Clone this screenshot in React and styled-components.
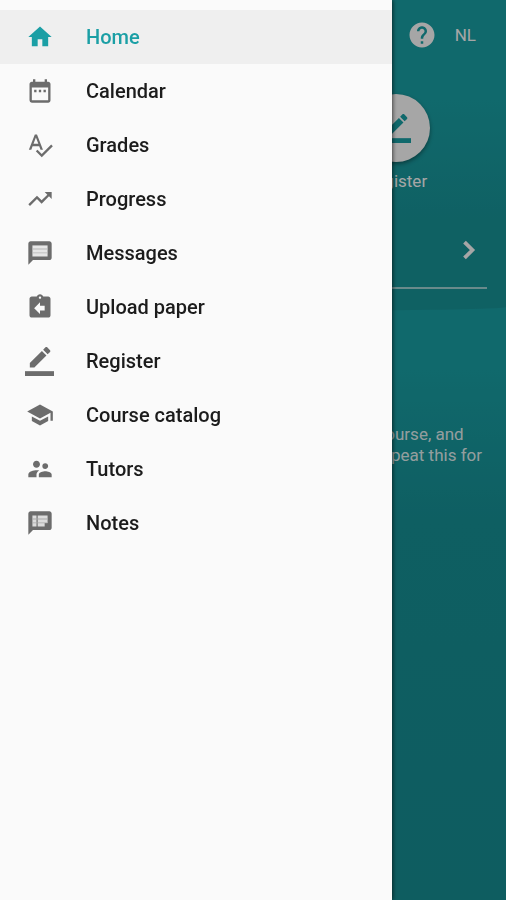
// external dependencies
import React from 'react';
import {
  MdAssignmentReturn,
  MdDateRange,
  MdHelp,
  MdHome,
  MdSchool,
  MdSpellcheck,
  MdSupervisorAccount,
  MdTrendingUp
} from 'react-icons/md';
import styled, {createGlobalStyle} from 'styled-components';

const GlobalStyle = createGlobalStyle`
  *, *::before, *::after {
    box-sizing: border-box;
  }

  body {
    background-color: #0e5d60;
    font-family: Roboto, "Liberation Sans", sans-serif;
    margin: 0;
  }
`;

export const Page = styled.div`
  background: linear-gradient(180deg, #1aa1a6 0, #1aa1a6 370px, #169297 520px, #168f94 100%);
  display: flex;
  flex-direction: column;
  min-height: 100vh;
  overflow: hidden;
  position: relative;
`;

export const Hero = styled.div`
  background: linear-gradient(180deg, #1aa1a6 0, #1aa1a6 100px, #189599 220px, #189599 100%);
  border-radius: 0 0 50% 50% / 0 0 4px 4px;
  padding: 0 19px 22px;
`;

export const Toolbar = styled.header`
  align-items: center;
  color: #fff;
  display: flex;
  gap: 18px;
  height: 70px;
  justify-content: flex-end;
  padding-right: 11px;
`;

export const ToolbarButton = styled.button`
  align-items: center;
  background: none;
  border: 0;
  color: inherit;
  display: flex;
  font: inherit;
  font-size: 17px;
  padding: 0;

  svg {
    height: 30px;
    width: 30px;
  }
`;

export const Shortcuts = styled.div`
  display: flex;
  justify-content: flex-end;
  padding: 24px 57px 0 0;
`;

export const Shortcut = styled.a`
  align-items: center;
  color: #fff;
  display: flex;
  flex-direction: column;
  font-size: 17px;
  gap: 9px;
  line-height: 20px;
  text-decoration: none;
`;

export const ShortcutIcon = styled.span`
  align-items: center;
  background-color: #fff;
  border-radius: 50%;
  box-shadow: 0 2px 4px rgba(0, 0, 0, 0.4);
  color: #1aa1a6;
  display: flex;
  height: 68px;
  justify-content: center;
  width: 68px;

  svg {
    height: 29px;
    width: 29px;
  }
`;

export const NextRow = styled.div`
  border-bottom: 2px solid rgba(255, 255, 255, 0.6);
  display: flex;
  height: 98px;
  justify-content: flex-end;
  padding-top: 42px;
`;

export const NextButton = styled(ToolbarButton)`
  color: #fff;
  height: 34px;

  svg {
    height: 36px;
    width: 36px;
  }
`;

export const Intro = styled.p`
  align-self: flex-end;
  color: rgba(255, 255, 255, 0.9);
  font-size: 17px;
  line-height: 21px;
  margin: 113px 24px 0;
`;

export const Scrim = styled.div`
  background-color: rgba(0, 0, 0, 0.35);
  inset: 0;
  position: fixed;
`;

export const Drawer = styled.aside`
  background-color: #fafafa;
  bottom: 0;
  box-shadow: 1px 0 4px rgba(0, 0, 0, 0.6);
  left: 0;
  max-width: 85vw;
  overflow-y: auto;
  padding-top: 10px;
  position: fixed;
  top: 0;
  width: 392px;
`;

export const Menu = styled.ul`
  list-style: none;
  margin: 0;
  padding: 0;
`;

export const MenuLink = styled.a`
  align-items: center;
  background-color: ${({$isActive}) => ($isActive ? '#efefef' : 'transparent')};
  color: ${({$isActive}) => ($isActive ? '#1b9fa5' : '#1c1c1c')};
  display: flex;
  font-size: 20px;
  font-weight: 500;
  gap: 32px;
  height: 54px;
  padding: 0 25px;
  text-decoration: none;
`;

export const MenuIcon = styled.span`
  align-items: center;
  color: ${({$isActive}) => ($isActive ? '#1b9fa5' : '#6c6c6c')};
  display: flex;
  flex-shrink: 0;
  justify-content: center;
  width: 29px;

  svg {
    height: ${({$size}) => $size}px;
    width: ${({$size}) => $size}px;
  }
`;

const RegisterIcon = () => {
  return (
    <svg fill="currentColor" viewBox="0 0 24 24">
      <path d="M17.75 7L14 3.25l-10 10V17h3.75l10-10zm2.96-2.96c.39-.39.39-1.02 0-1.41L18.37.29c-.39-.39-1.02-.39-1.41 0L15 2.25 18.75 6l1.96-1.96z" />
      <path d="M0 20h24v4H0z" />
    </svg>
  );
};

const MessagesIcon = () => {
  return (
    <svg fill="currentColor" viewBox="0 0 24 24">
      <path d="M20 2H4c-1.1 0-2 .9-2 2v18l4-4h14c1.1 0 2-.9 2-2V4c0-1.1-.9-2-2-2z" />
      <path d="M5.5 5.5h13v9.500h-13z" fill="#e6e6e6" />
      <path d="M5.5 8.2h13v.7h-13zM5.5 11.5h13v.7h-13z" fill="#b4b4b4" />
    </svg>
  );
};

const NotesIcon = () => {
  return (
    <svg fill="currentColor" viewBox="0 0 24 24">
      <path d="M20 2H4c-1.1 0-2 .9-2 2v18l4-4h14c1.1 0 2-.9 2-2V4c0-1.1-.9-2-2-2z" />
      <path d="M5.5 5.5H9V15H5.5zM10 5.5h8.5V12H16v3h-6z" fill="#dcdcdc" />
      <path d="M5.5 8.2h13v.7h-13zM5.5 11.5h13v.7h-13z" fill="#a8a8a8" />
    </svg>
  );
};

const NextIcon = () => {
  return (
    <svg fill="none" stroke="currentColor" strokeWidth="2.5" viewBox="0 0 24 24">
      <path d="M9 6.7l5.300 5.300L9 17.300" />
    </svg>
  );
};

const MENU_ITEMS = [
  {Icon: MdHome, label: 'Home'},
  {Icon: MdDateRange, label: 'Calendar'},
  {Icon: MdSpellcheck, label: 'Grades'},
  {Icon: MdTrendingUp, label: 'Progress'},
  {Icon: MessagesIcon, label: 'Messages'},
  {Icon: MdAssignmentReturn, label: 'Upload paper'},
  {Icon: RegisterIcon, iconSize: 29, label: 'Register'},
  {Icon: MdSchool, label: 'Course catalog'},
  {Icon: MdSupervisorAccount, label: 'Tutors'},
  {Icon: NotesIcon, label: 'Notes'}
];

const App = () => {
  return (
    <>
      <GlobalStyle />

      <Page>
        <Hero>
          <Toolbar>
            <ToolbarButton aria-label="Help" type="button">
              <MdHelp />
            </ToolbarButton>

            <ToolbarButton type="button">NL</ToolbarButton>
          </Toolbar>

          <Shortcuts>
            <Shortcut href="#register">
              <ShortcutIcon>
                <RegisterIcon />
              </ShortcutIcon>
              Register
            </Shortcut>
          </Shortcuts>

          <NextRow>
            <NextButton aria-label="Next" type="button">
              <NextIcon />
            </NextButton>
          </NextRow>
        </Hero>

        <Intro>
          course, and
          <br />
          repeat this for
        </Intro>
      </Page>

      <Scrim />

      <Drawer>
        <nav>
          <Menu>
            {MENU_ITEMS.map(({Icon, iconSize = 28, label}, index) => (
              <li key={label}>
                <MenuLink $isActive={index === 0} href={`#${label.toLowerCase().replace(' ', '-')}`}>
                  <MenuIcon $isActive={index === 0} $size={iconSize}>
                    <Icon />
                  </MenuIcon>
                  {label}
                </MenuLink>
              </li>
            ))}
          </Menu>
        </nav>
      </Drawer>
    </>
  );
};

export default App;
